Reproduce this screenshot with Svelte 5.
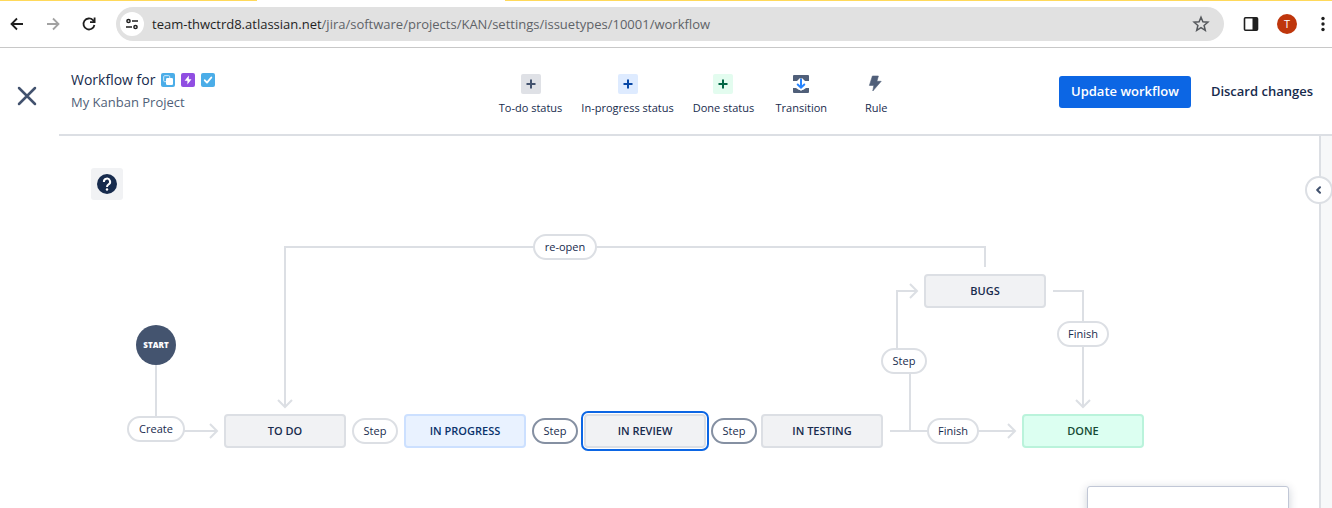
<script>
  const host = 'team-thwctrd8.atlassian.net';
  const path = '/jira/software/projects/KAN/settings/issuetypes/10001/workflow';

  const statusTools = [
    { label: 'To-do status', tone: 'todo' },
    { label: 'In-progress status', tone: 'progress' },
    { label: 'Done status', tone: 'done' }
  ];

  const nodes = [
    { label: 'TO DO', x: 165, y: 278, tone: 'todo' },
    { label: 'IN PROGRESS', x: 345, y: 278, tone: 'progress' },
    { label: 'IN REVIEW', x: 525, y: 278, tone: 'todo', selected: true },
    { label: 'IN TESTING', x: 702, y: 278, tone: 'todo' },
    { label: 'BUGS', x: 865, y: 138, tone: 'todo' },
    { label: 'DONE', x: 963, y: 278, tone: 'done' }
  ];

  // Transition labels are placed by their centre point.
  const transitions = [
    { label: 'Create', x: 97, y: 293, w: 58 },
    { label: 're-open', x: 506, y: 111, w: 64 },
    { label: 'Step', x: 316, y: 295, w: 46 },
    { label: 'Step', x: 496, y: 295, w: 46, active: true },
    { label: 'Step', x: 675, y: 295, w: 46, active: true },
    { label: 'Step', x: 845, y: 225, w: 46 },
    { label: 'Finish', x: 894, y: 295, w: 52 },
    { label: 'Finish', x: 1024, y: 198, w: 52 }
  ];

  const edges = [
    'M97 229V280',
    'M125 295H158M151 288l7 7l-7 7',
    'M926 131V111H226V271M219 264l7 7l7 -7',
    'M831 295H956M949 288l7 7l-7 7',
    'M851 295V225H838V155H858M851 148l7 7l-7 7',
    'M994 155H1024V271M1017 264l7 7l7 -7'
  ];
</script>

<div class="page">
  <div class="browser">
    <div class="tabs"><span></span><span></span></div>
    <nav class="nav" aria-label="Browser">
      <button class="plain" aria-label="Back">
        <svg width="16" height="16" viewBox="0 0 16 16" fill="none" stroke="#1f1f1f" stroke-width="1.8"><path d="M14 8H3M8 2.5L2.5 8L8 13.5" /></svg>
      </button>
      <button class="plain" aria-label="Forward">
        <svg width="16" height="16" viewBox="0 0 16 16" fill="none" stroke="#a2a2a2" stroke-width="1.8"><path d="M2 8H13M8 2.5L13.5 8L8 13.5" /></svg>
      </button>
      <button class="plain" aria-label="Reload">
        <svg width="16" height="16" viewBox="0 0 16 16" fill="none" stroke="#1f1f1f" stroke-width="1.8"><path d="M13.4 9A5.5 5.5 0 1 1 12 4.2L13.5 5.8" /><path d="M13.6 1.5V6.2H9" /></svg>
      </button>
    </nav>
    <div class="address">
      <button class="site" aria-label="Site information">
        <svg width="14" height="14" viewBox="0 0 14 14" fill="none" stroke="#1f1f1f" stroke-width="1.5"><circle cx="3.5" cy="4" r="1.6" /><path d="M7 4H13M1 10H7" /><circle cx="10.5" cy="10" r="1.6" /></svg>
      </button>
      <span class="url">{host}<span>{path}</span></span>
      <button class="plain star" aria-label="Bookmark">
        <svg width="18" height="18" viewBox="0 0 18 18" fill="none" stroke="#55585c" stroke-width="1.5"><path d="M9 2.2L10.9 6.8L15.9 7.2L12.1 10.5L13.3 15.3L9 12.7L4.7 15.3L5.9 10.5L2.1 7.2L7.1 6.8Z" /></svg>
      </button>
    </div>
    <div class="extras">
      <button class="plain" aria-label="Side panel">
        <svg width="16" height="16" viewBox="0 0 16 16"><rect x="1.5" y="1.8" width="13" height="12.4" rx="1" fill="#fff" stroke="#1f1f1f" stroke-width="1.6" /><path d="M9.5 2H14.5V14H9.5Z" fill="#1f1f1f" /></svg>
      </button>
      <button class="avatar" aria-label="Profile">T</button>
      <button class="plain" aria-label="Menu">
        <svg width="16" height="16" viewBox="0 0 16 16" fill="#1f1f1f"><circle cx="8" cy="2.5" r="1.7" /><circle cx="8" cy="8" r="1.7" /><circle cx="8" cy="13.5" r="1.7" /></svg>
      </button>
    </div>
  </div>

  <div class="app">
    <aside class="rail">
      <button class="plain" aria-label="Close">
        <svg width="22" height="22" viewBox="0 0 22 22" fill="none" stroke="#42526e" stroke-width="2.5" stroke-linecap="round"><path d="M3 3L19 19M19 3L3 19" /></svg>
      </button>
    </aside>
    <main>
      <header>
        <div class="title">
          <h1>
            Workflow for
            <svg width="14" height="14" viewBox="0 0 14 14"><rect width="14" height="14" rx="2" fill="#4bade8" /><rect x="2.7" y="2.7" width="6" height="6" rx="1" fill="#4bade8" stroke="#d5ecfa" /><rect x="5" y="5" width="7" height="7" rx="1.2" fill="#fff" /></svg>
            <svg width="14" height="14" viewBox="0 0 14 14"><rect width="14" height="14" rx="2" fill="#904ee2" /><path d="M7.8 2.5L3.6 7.7H6.4V11.5L10.5 6.2H7.8Z" fill="#fff" /></svg>
            <svg width="14" height="14" viewBox="0 0 14 14"><rect width="14" height="14" rx="2" fill="#4bade8" /><path d="M3.8 7.3L6 9.6L10.3 4.5" fill="none" stroke="#fff" stroke-width="1.9" stroke-linecap="round" stroke-linejoin="round" /></svg>
          </h1>
          <p>My Kanban Project</p>
        </div>
        <div class="tools">
          {#each statusTools as tool}
            <button class="tool">
              <span class="plus {tool.tone}">
                <svg width="10" height="10" viewBox="0 0 10 10" fill="none" stroke="currentColor" stroke-width="2"><path d="M5 0.5V9.5M0.5 5H9.5" /></svg>
              </span>
              {tool.label}
            </button>
          {/each}
          <button class="tool">
            <svg width="20" height="20" viewBox="0 0 20 20"><path d="M2 2a1 1 0 0 1 1-1H17a1 1 0 0 1 1 1V7H14L12 5H8L6 7H2ZM2 14H5L8 16H12L15 14H18V18a1 1 0 0 1-1 1H3a1 1 0 0 1-1-1Z" fill="#505f79" /><path d="M10 4.5V14M6.5 10.8L10 14.2L13.5 10.8" fill="none" stroke="#fff" stroke-width="4" /><path d="M10 5.5V13.5M6.7 10.5L10 13.7L13.3 10.5" fill="none" stroke="#2684ff" stroke-width="2" stroke-linecap="round" /></svg>
            Transition
          </button>
          <button class="tool">
            <svg width="20" height="20" viewBox="0 0 20 20"><path d="M6.4 2H12.4L10.9 7.3H15.2L6.8 17L7.8 11.4H3.4Z" fill="#505f79" stroke="#505f79" stroke-width="0.6" stroke-linejoin="round" /></svg>
            Rule
          </button>
        </div>
        <div class="actions">
          <button class="primary">Update workflow</button>
          <button class="subtle">Discard changes</button>
        </div>
      </header>

      <div class="workspace">
        <section class="canvas" aria-label="Workflow diagram">
          <svg class="edges" fill="none" stroke="#dcdfe4" stroke-width="2">
            {#each edges as d}<path {d} />{/each}
          </svg>
          <button class="help" aria-label="Help">
            <svg width="20" height="20" viewBox="0 0 20 20"><circle cx="10" cy="10" r="10" fill="#172b4d" /><path d="M6.9 8A3.1 3.1 0 1 1 11.6 10.4C10.4 11.1 10 11.5 10 13" fill="none" stroke="#fff" stroke-width="2" /><circle cx="10" cy="15.5" r="1.2" fill="#fff" /></svg>
          </button>
          <div class="start">START</div>
          {#each nodes as n}
            <button class="node {n.tone}" class:selected={n.selected} style="left:{n.x}px;top:{n.y}px">{n.label}</button>
          {/each}
          {#each transitions as t}
            <button class="transition" class:active={t.active} style="left:{t.x}px;top:{t.y}px;width:{t.w}px">{t.label}</button>
          {/each}
          <div class="popup"></div>
        </section>
        <aside class="panel">
          <button class="expand" aria-label="Expand panel">
            <svg width="8" height="8" viewBox="0 0 8 8" fill="none" stroke="#42526e" stroke-width="2" stroke-linecap="round" stroke-linejoin="round"><path d="M5 1.2L2.2 4L5 6.8" /></svg>
          </button>
        </aside>
      </div>
    </main>
  </div>
</div>

<style>
  .page {
    display: flex;
    flex-direction: column;
    min-height: 100vh;
    overflow: hidden;
    background: #fff;
    color: #172b4d;
    font-family: 'Open Sans', 'Noto Sans', sans-serif;
    font-size: 13px;
  }
  .page :is(button) {
    font-family: inherit;
    color: inherit;
    cursor: pointer;
  }
  .plain {
    display: flex;
    padding: 0;
    border: 0;
    background: none;
  }
  .browser {
    display: flex;
    align-items: center;
    gap: 19px;
    height: 47px;
    padding: 0 1px 0 9px;
    border-bottom: 1px solid #c8c8c8;
    position: relative;
  }
  .tabs {
    position: absolute;
    inset: 0 0 auto;
    display: flex;
    justify-content: space-between;
  }
  .tabs span {
    height: 1px;
    width: 257px;
    background: #ffd95a;
  }
  .tabs span:last-child {
    width: calc(100% - 505px);
  }
  .nav {
    display: flex;
    gap: 20px;
  }
  .address {
    display: flex;
    flex: 1;
    align-items: center;
    gap: 8px;
    height: 34px;
    padding: 0 14px 0 4px;
    border-radius: 17px;
    background: #e1e1e1;
  }
  .site {
    display: grid;
    place-items: center;
    width: 24px;
    height: 24px;
    padding: 0;
    border: 0;
    border-radius: 50%;
    background: #fff;
  }
  .url {
    flex: 1;
    color: #1f1f1f;
    white-space: nowrap;
  }
  .url span {
    color: #5f6368;
  }
  .extras {
    display: flex;
    align-items: center;
    gap: 18px;
  }
  .avatar {
    display: grid;
    place-items: center;
    width: 20px;
    height: 20px;
    padding: 0;
    border: 0;
    border-radius: 50%;
    background: #bf360c;
    font-size: 11px;
  }
  .page .avatar {
    color: #fff;
  }
  .app {
    display: flex;
    flex: 1;
  }
  .rail {
    display: flex;
    align-items: flex-start;
    width: 59px;
    padding: 37px 16px;
    box-sizing: border-box;
  }
  main {
    display: flex;
    flex: 1;
    flex-direction: column;
    min-width: 0;
  }
  header {
    display: grid;
    grid-template-columns: 1fr auto 1fr;
    align-items: center;
    height: 86px;
    padding-left: 12px;
    border-bottom: 2px solid #dcdfe4;
  }
  h1 {
    display: flex;
    align-items: center;
    gap: 6px;
    margin: 0;
    font-size: 14px;
    font-weight: 500;
    line-height: 22px;
  }
  p {
    margin: 0;
    color: #505f79;
    line-height: 22px;
  }
  .tools {
    display: flex;
    gap: 19px;
    padding-top: 8px;
  }
  .tool {
    display: flex;
    flex-direction: column;
    align-items: center;
    gap: 6px;
    min-width: 56px;
    padding: 0;
    border: 0;
    background: none;
    font-size: 11px;
    line-height: 16px;
    white-space: nowrap;
  }
  .plus {
    display: grid;
    place-items: center;
    width: 20px;
    height: 20px;
    border-radius: 2px;
  }
  .plus.todo {
    background: #dfe1e6;
    color: #42526e;
  }
  .plus.progress {
    background: #deebff;
    color: #0747a6;
  }
  .plus.done {
    background: #e3fcef;
    color: #006644;
  }
  .actions {
    display: flex;
    justify-content: flex-end;
    gap: 8px;
    padding: 2px 7px 0 0;
  }
  .actions button {
    height: 32px;
    padding: 0 12px 2px;
    border: 0;
    border-radius: 3px;
    font-size: 13px;
    font-weight: 600;
    white-space: nowrap;
  }
  .actions .primary {
    background: #0c66e4;
    color: #fff;
  }
  .actions .subtle {
    background: none;
  }
  .workspace {
    display: flex;
    flex: 1;
  }
  .canvas {
    position: relative;
    flex: 1;
    overflow: hidden;
  }
  .edges {
    position: absolute;
    width: 100%;
    height: 100%;
  }
  .help {
    position: absolute;
    left: 32px;
    top: 32px;
    display: grid;
    place-items: center;
    width: 32px;
    height: 32px;
    padding: 0;
    border: 0;
    border-radius: 3px;
    background: #f1f2f4;
  }
  .start {
    position: absolute;
    left: 77px;
    top: 189px;
    width: 40px;
    border-radius: 50%;
    background: #44546f;
    color: #fff;
    font-size: 8px;
    font-weight: 800;
    line-height: 40px;
    text-align: center;
  }
  .node {
    position: absolute;
    width: 122px;
    height: 34px;
    padding: 0 0 2px;
    border: 2px solid #dcdfe4;
    border-radius: 4px;
    background: #f1f2f4;
    font-size: 11px;
    font-weight: 600;
  }
  .node.progress {
    border-color: #cce0ff;
    background: #e9f2ff;
  }
  .node.done {
    border-color: #baf3db;
    background: #dcfff1;
  }
  .page .node.progress {
    color: #09326c;
  }
  .page .node.done {
    color: #164b35;
  }
  .node.selected {
    outline: 2px solid #0c66e4;
    outline-offset: 1px;
  }
  .transition {
    position: absolute;
    height: 26px;
    padding: 0 0 2px;
    border: 2px solid #dcdfe4;
    border-radius: 13px;
    background: #fff;
    font-size: 11px;
    transform: translate(-50%, -50%);
  }
  .transition.active {
    border-color: #8590a2;
  }
  .popup {
    position: absolute;
    right: 30px;
    top: 350px;
    width: 200px;
    height: 120px;
    border: 1px solid #c1c7d6;
    border-radius: 3px;
    background: #fff;
    box-shadow: 0 2px 10px rgba(9, 30, 66, 0.2);
  }
  .panel {
    position: relative;
    width: 11px;
    border-left: 2px solid #dcdfe4;
    background: #f7f8f9;
  }
  .expand {
    position: absolute;
    left: -16px;
    top: 40px;
    display: grid;
    place-items: center;
    width: 28px;
    height: 28px;
    padding: 0;
    border: 2px solid #dcdfe4;
    border-radius: 50%;
    background: #fff;
  }
</style>
